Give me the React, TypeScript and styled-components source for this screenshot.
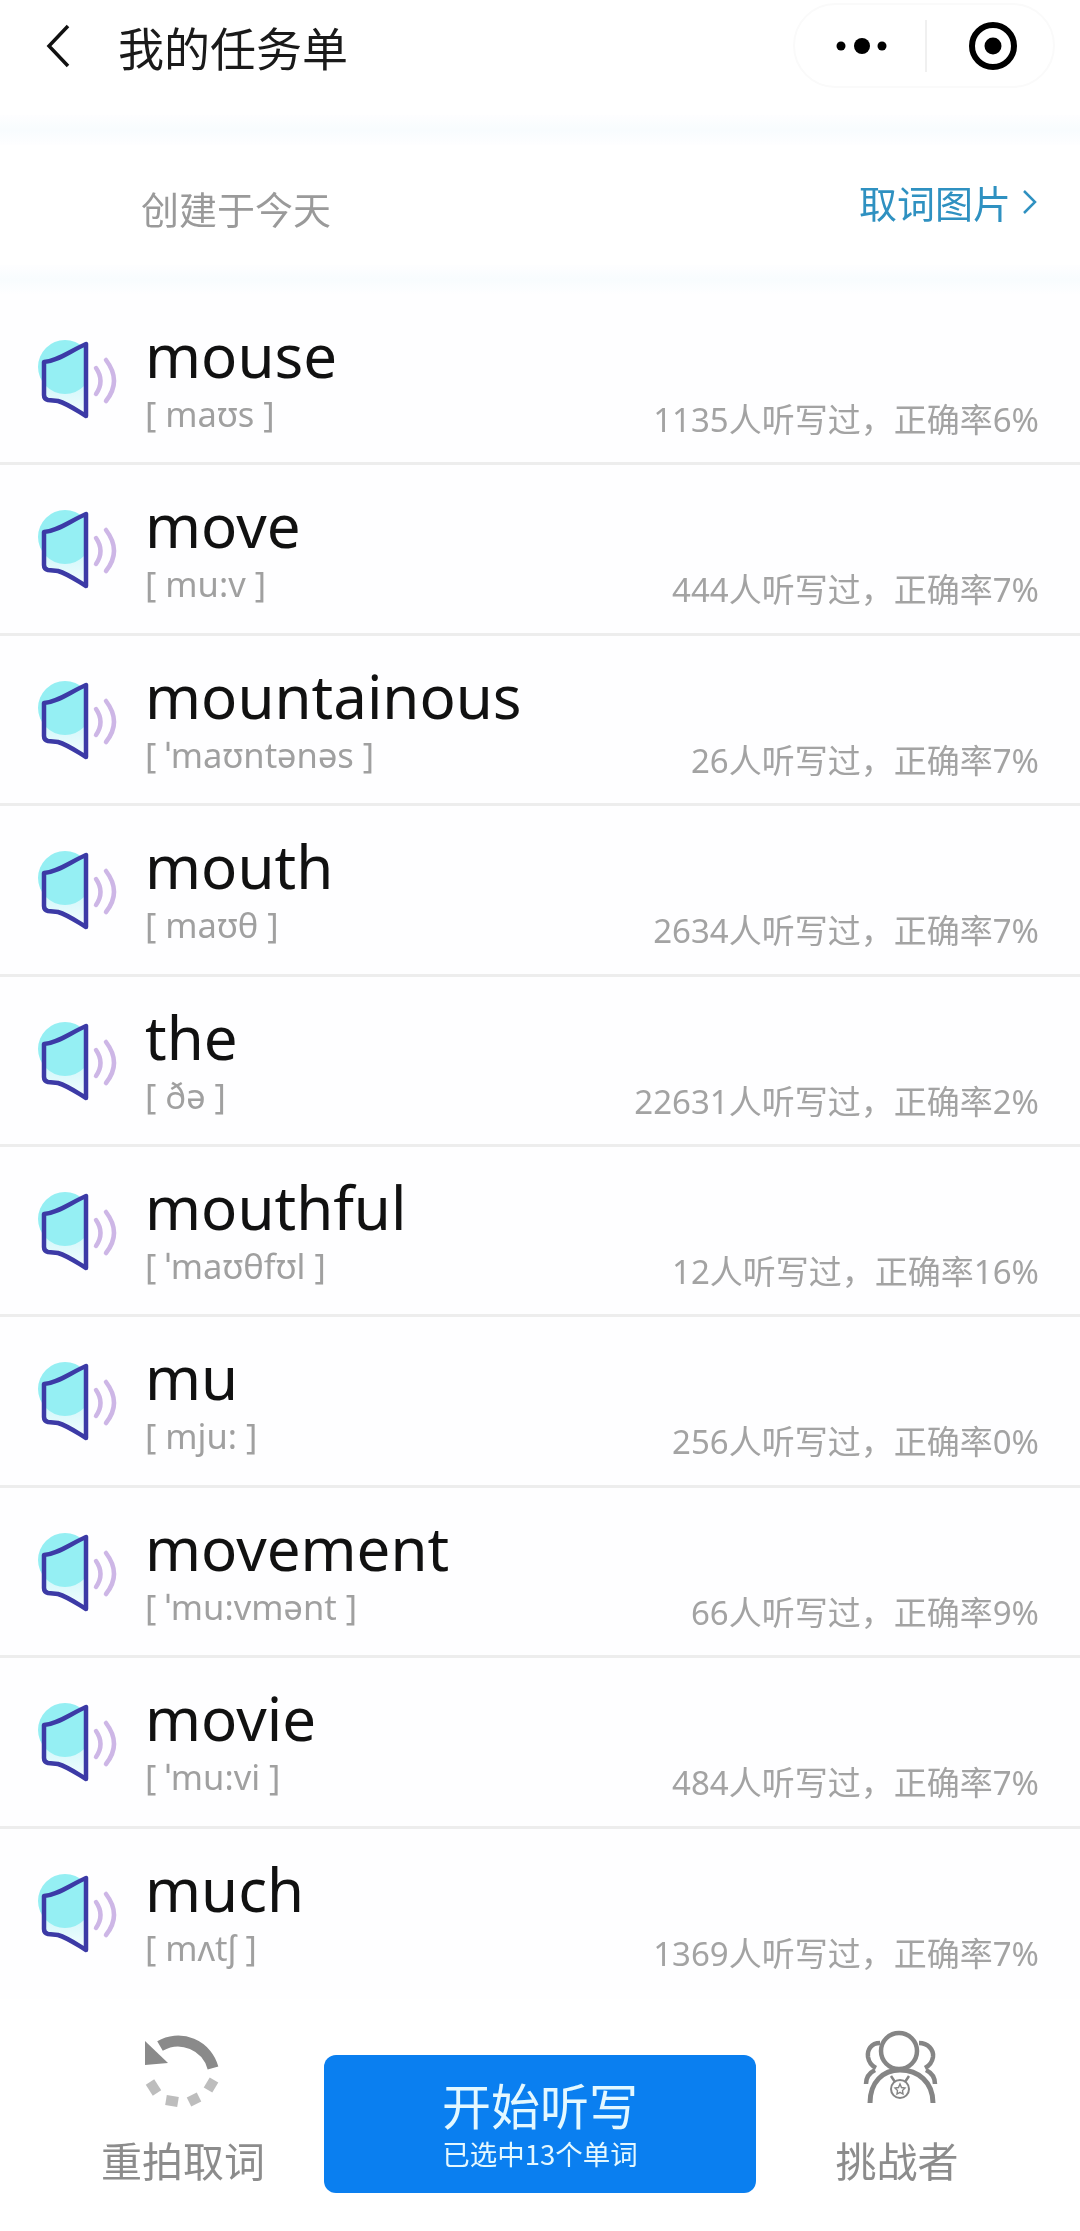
import React, {FC} from 'react';
import styled, {createGlobalStyle} from 'styled-components';

type WordType = {
    word: string
    phonetic: string
    count: number
    rate: number
}

const words: WordType[] = [
    {word: 'mouse', phonetic: '[ maʊs ]', count: 1135, rate: 6},
    {word: 'move', phonetic: '[ mu:v ]', count: 444, rate: 7},
    {word: 'mountainous', phonetic: '[ ˈmaʊntənəs ]', count: 26, rate: 7},
    {word: 'mouth', phonetic: '[ maʊθ ]', count: 2634, rate: 7},
    {word: 'the', phonetic: '[ ðə ]', count: 22631, rate: 2},
    {word: 'mouthful', phonetic: '[ ˈmaʊθfʊl ]', count: 12, rate: 16},
    {word: 'mu', phonetic: '[ mju: ]', count: 256, rate: 0},
    {word: 'movement', phonetic: '[ ˈmu:vmənt ]', count: 66, rate: 9},
    {word: 'movie', phonetic: '[ ˈmu:vi ]', count: 484, rate: 7},
    {word: 'much', phonetic: '[ mʌtʃ ]', count: 1369, rate: 7},
]

const SpeakerIcon: FC = () => (
    <SpeakerSvg viewBox="0 0 120 120">
        <defs>
            <clipPath id="speakerGlow">
                <rect x="18" y="20" width="49" height="66"/>
            </clipPath>
            <linearGradient id="speakerFill" x1="0" y1="0" x2="0" y2="1">
                <stop offset="0" stopColor="#a6f2f6"/>
                <stop offset="1" stopColor="#f4fcfe"/>
            </linearGradient>
        </defs>
        <path d="M24 51 C38 50 50 40 66 33 L66 105 C56 99 48 93 38 90 L28 89 Q24 88 24 84 Z" fill="url(#speakerFill)"/>
        <circle cx="45" cy="56" r="27" fill="#95eff3" clipPath="url(#speakerGlow)"/>
        <path d="M24 51 C38 50 50 40 66 33 L66 105 C56 99 48 93 38 90 L28 89 Q24 88 24 84 Z"
              fill="none" stroke="#3c3aa6" strokeWidth="4.500" strokeLinejoin="round"/>
        <path d="M76 57 Q85 70 76 83" fill="none" stroke="#cdb6e6" strokeWidth="4.500" strokeLinecap="round"/>
        <path d="M86 49 Q102 70 86 90" fill="none" stroke="#cdb6e6" strokeWidth="4.500" strokeLinecap="round"/>
    </SpeakerSvg>
)

const RetakeIcon: FC = () => (
    <RetakeSvg viewBox="0 0 130 100">
        <path d="M95 58 A36 36 0 0 0 42 36" fill="none" stroke="#8a8a8a" strokeWidth="11"/>
        <polygon points="27,31 27,55 50,53" fill="#8a8a8a"/>
        <g stroke="#bdbdbd" strokeWidth="10">
            <line x1="32" y1="72" x2="39" y2="83"/>
            <line x1="48" y1="90" x2="60" y2="92"/>
            <line x1="71" y1="92" x2="81" y2="87"/>
            <line x1="90" y1="80" x2="96" y2="70"/>
        </g>
    </RetakeSvg>
)

const ChallengerIcon: FC = () => (
    <ChallengerSvg viewBox="0 0 120 100" fill="none" stroke="#858585">
        <circle cx="56" cy="33" r="18" strokeWidth="4.500"/>
        <path d="M37 25 C28 25 24 32 25 39 C26 45 29 48 33 50" strokeWidth="4.500"/>
        <path d="M76 25 C85 25 91 32 90 39 C89 45 86 48 82 50" strokeWidth="4.500"/>
        <path d="M23 66 C23 60 26 55 32 52" strokeWidth="4.500"/>
        <path d="M92 66 C92 60 89 55 83 52" strokeWidth="4.500"/>
        <path d="M27 85 C27 64 40 52 57 52 C75 52 90 64 90 85" strokeWidth="5"/>
        <circle cx="57" cy="71" r="9" strokeWidth="2"/>
        <path d="M48 58 L52 64 M66 58 L62 64" strokeWidth="2.500"/>
        <path d="M57 66 L58.5 69.5 L62 70 L59.5 72.5 L60 76 L57 74.3 L54 76 L54.5 72.5 L52 70 L55.500 69.500 Z"
              strokeWidth="1.400"/>
    </ChallengerSvg>
)

const App: FC = () => {

    const wordsMap = words.map(w => {
        return (
            <WordRow key={w.word}>
                <SpeakerIcon/>
                <WordText>
                    <WordTitle>{w.word}</WordTitle>
                    <Phonetic>{w.phonetic}</Phonetic>
                </WordText>
                <Stats>{w.count}人听写过，正确率{w.rate}%</Stats>
            </WordRow>
        )
    })

    return (
        <Page>
            <GlobalStyle/>
            <Header>
                <HeaderLeft>
                    <svg width="26" height="46" viewBox="0 0 26 46">
                        <path d="M23 3 L4 23 L23 43" fill="none" stroke="#111" strokeWidth="3.500"/>
                    </svg>
                    <PageTitle>我的任务单</PageTitle>
                </HeaderLeft>
                <Capsule>
                    <svg width="62" height="20" viewBox="0 0 62 20">
                        <circle cx="9" cy="10" r="4.500" fill="#000"/>
                        <circle cx="30" cy="10" r="8" fill="#000"/>
                        <circle cx="50" cy="10" r="4.500" fill="#000"/>
                    </svg>
                    <CapsuleDivider/>
                    <svg width="50" height="50" viewBox="0 0 50 50">
                        <circle cx="25" cy="25" r="21" fill="none" stroke="#000" strokeWidth="6"/>
                        <circle cx="25" cy="25" r="8.500" fill="#000"/>
                    </svg>
                </Capsule>
            </Header>
            <Band/>
            <SubHeader>
                <Created>创建于今天</Created>
                <PictureLink>
                    取词图片
                    <svg width="18" height="28" viewBox="0 0 18 28">
                        <path d="M3 3 L14 14 L3 25" fill="none" stroke="#2f91c1" strokeWidth="2.500"/>
                    </svg>
                </PictureLink>
            </SubHeader>
            <Band/>
            <List>{wordsMap}</List>
            <Footer>
                <RetakeTab>
                    <RetakeIcon/>
                    <TabLabel>重拍取词</TabLabel>
                </RetakeTab>
                <StartButton>
                    <StartTitle>开始听写</StartTitle>
                    <StartSub>已选中13个单词</StartSub>
                </StartButton>
                <ChallengerTab>
                    <ChallengerIcon/>
                    <TabLabel>挑战者</TabLabel>
                </ChallengerTab>
            </Footer>
        </Page>
    );
};

export default App;

const GlobalStyle = createGlobalStyle`
  html, body {
    margin: 0;
    padding: 0;
    background: #fff;
  }

  * {
    box-sizing: border-box;
  }
`

const Page = styled.div`
  width: 1080px;
  height: 2231px;
  overflow: hidden;
  background: #fff;
  font-family: "Noto Sans", "Noto Sans CJK SC", sans-serif;
  filter: blur(0.5px);
`

const Header = styled.div`
  height: 115px;
  padding: 3px 25px 27px 45px;
  display: flex;
  align-items: center;
  justify-content: space-between;
`

const HeaderLeft = styled.div`
  display: flex;
  align-items: center;
  gap: 47px;
`

const PageTitle = styled.div`
  font-size: 46px;
  line-height: 60px;
  color: #1a1a1a;
  font-family: "Noto Sans CJK SC", sans-serif;
`

const Capsule = styled.div`
  width: 262px;
  height: 85px;
  padding-left: 37px;
  display: flex;
  align-items: center;
  border: 2px solid #fafafa;
  border-radius: 43px;
`

const CapsuleDivider = styled.div`
  width: 2px;
  height: 52px;
  margin: 0 41px 0 31px;
  background: #f0f0f0;
`

const Band = styled.div`
  height: 30px;
  background: linear-gradient(#fefeff, #f8fcfe, #fefeff);
`

const SubHeader = styled.div`
  height: 120px;
  padding: 0 41px 0 141px;
  display: flex;
  align-items: center;
  justify-content: space-between;
`

const Created = styled.div`
  font-size: 38px;
  line-height: 50px;
  margin-top: 5px;
  color: #9a9a9a;
  font-family: "Noto Sans CJK SC", sans-serif;
`

const PictureLink = styled.div`
  display: flex;
  align-items: center;
  gap: 10px;
  font-size: 38px;
  line-height: 50px;
  margin-bottom: 6px;
  color: #2f91c1;
  font-family: "Noto Sans CJK SC", sans-serif;
`

const List = styled.div`
  background: #fefeff;
`

const WordRow = styled.div`
  height: 170.4px;
  padding: 16px 41px 0 20px;
  display: flex;
  align-items: flex-start;
  border-bottom: 3px solid #ededed;

  &:last-child {
    border-bottom: none;
  }
`

const SpeakerSvg = styled.svg`
  width: 120px;
  height: 120px;
  flex-shrink: 0;
  margin-right: 5px;
`

const WordText = styled.div`
  padding-top: 7px;
  display: flex;
  flex-direction: column;
`

const WordTitle = styled.div`
  font-size: 60px;
  line-height: 75px;
  color: #111;
`

const Phonetic = styled.div`
  font-size: 34.5px;
  line-height: 42px;
  color: #a0a0a0;
  font-family: "Noto Sans", "DejaVu Sans", sans-serif;
`

const Stats = styled.div`
  margin: 88px 0 0 auto;
  font-size: 33px;
  line-height: 42px;
  color: #a3a3a3;
  white-space: nowrap;
`

const Footer = styled.div`
  height: 233px;
  padding: 11px 42px 0 44px;
  display: flex;
  align-items: flex-start;
  background: #fff;
`

const RetakeTab = styled.div`
  width: 280px;
  padding-right: 2px;
  display: flex;
  flex-direction: column;
  align-items: center;
`

const ChallengerTab = styled(RetakeTab)`
  width: 282px;
  padding: 8px 0 0;
`

const RetakeSvg = styled.svg`
  width: 130px;
  height: 100px;
  margin-bottom: 24px;
`

const ChallengerSvg = styled.svg`
  width: 120px;
  height: 100px;
  margin-bottom: 16px;
  transform: translateX(6px);
`

const TabLabel = styled.div`
  font-size: 41px;
  line-height: 50px;
  color: #8c8c8c;
  font-family: "Noto Sans CJK SC", sans-serif;
`

const StartButton = styled.div`
  width: 432px;
  height: 138px;
  margin-top: 45px;
  padding-bottom: 4px;
  display: flex;
  flex-direction: column;
  align-items: center;
  justify-content: center;
  border-radius: 12px;
  background: #0a7ff0;
  color: #e4f8ff;
  font-family: "Noto Sans CJK SC", sans-serif;
`

const StartTitle = styled.div`
  font-size: 49px;
  line-height: 62px;
`

const StartSub = styled.div`
  font-size: 27.5px;
  line-height: 36px;
`
